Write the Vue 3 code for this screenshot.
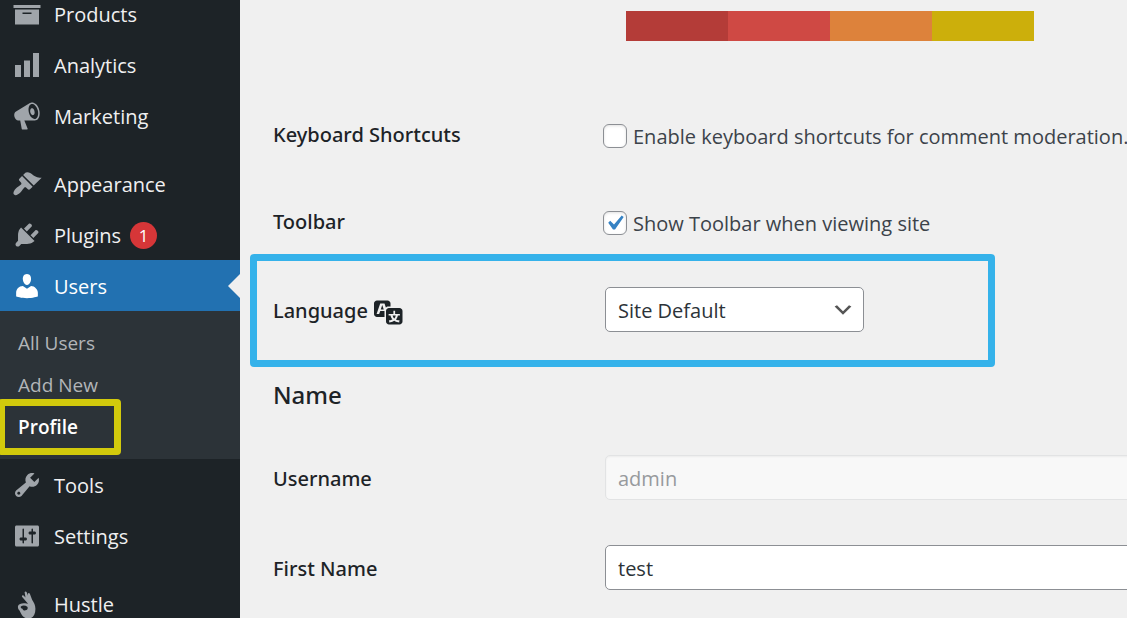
<script setup>
import { ref } from 'vue'

const icons = {
  archive: 'M19 4v2H1V4h18zM2 7h16v10H2V7zm11 3V9H7v1h6z',
  chart: 'M18 18V2h-4v16h4zm-6 0V7H8v11h4zm-6 0v-8H2v8h4z',
  megaphone: 'M18.15 5.94c.46 1.62.38 3.22-.02 4.48-.42 1.28-1.26 2.18-2.3 2.48-.16.06-.26.06-.4.06-.06.02-.12.02-.18.02-.06.02-.14.02-.22.02h-6.8l2.22 5.5c.02.14-.06.26-.14.34-.08.1-.24.16-.34.16H6.95c-.1 0-.26-.06-.34-.16-.08-.08-.16-.2-.14-.34l-1-5.5H4.25l-.02-.02c-.5.06-1.08-.18-1.54-.62s-.88-1.08-1.06-1.88c-.24-.8-.2-1.56-.02-2.2.18-.62.58-1.08 1.06-1.3l.02-.02 9-5.4c.1-.06.18-.1.24-.16.06-.04.14-.08.24-.12.16-.08.28-.12.5-.18 1.04-.3 2.24.1 3.22.98s1.84 2.24 2.26 3.86zm-2.58 5.98h-.02c.4-.1.74-.34 1.04-.7.58-.7.86-1.76.86-3.04 0-.64-.1-1.3-.28-1.98-.34-1.36-1.02-2.5-1.78-3.24s-1.68-1.1-2.46-.88c-.82.22-1.4.96-1.7 2-.32 1.04-.28 2.36.06 3.72.38 1.36 1 2.5 1.8 3.24.78.74 1.62 1.1 2.48.88zm-2.54-7.08c.22-.04.42-.02.62.04.38.16.76.48 1.02 1s.42 1.2.42 1.78c0 .3-.04.56-.12.8-.18.48-.44.84-.86.94-.34.1-.8-.06-1.14-.4s-.64-.86-.78-1.5c-.18-.62-.12-1.24.02-1.72s.48-.84.82-.94z',
  brush: 'M14.48 11.06L7.41 3.99l1.5-1.5c.5-.56 2.3-.47 3.51.32 1.21.8 1.43 1.28 2.91 2.1 1.18.64 2.45 1.26 4.45.85zm-.71.71L6.7 4.7 4.93 6.47c-.39.39-.39 1.02 0 1.41l1.06 1.06c.39.39.39 1.03 0 1.42-.6.6-1.43 1.11-2.21 1.69-.35.26-.7.53-1.01.84C1.43 14.23.4 16.08 1.4 17.07c.99 1 2.84-.03 4.18-1.36.31-.31.58-.66.85-1.02.57-.78 1.08-1.61 1.69-2.21.39-.39 1.02-.39 1.41 0l1.06 1.06c.39.39 1.02.39 1.41 0z',
  plug: 'M13.11 4.36L9.87 7.6 8 5.73l3.24-3.24c.35-.34 1.05-.2 1.56.32.52.51.66 1.21.31 1.55zm-8 1.77l.91-1.12 9.01 9.01-1.19.84c-.71.71-2.63 1.16-3.82 1.16H6.14L4.9 17.26c-.59.59-1.54.59-2.12 0-.59-.58-.59-1.53 0-2.12l1.24-1.24v-3.88c0-1.13.4-3.19 1.09-3.89zm7.26 3.97l3.24-3.24c.34-.35 1.04-.21 1.55.31.52.51.66 1.21.31 1.55l-3.24 3.25z',
  user: 'M10 9.25c-2.27 0-2.73-3.44-2.73-3.44C7 4.02 7.82 2 9.97 2c2.16 0 2.98 2.02 2.71 3.81 0 0-.41 3.44-2.68 3.44zm0 2.57L12.72 10c2.39 0 4.52 2.33 4.52 4.53v2.49s-3.65 1.13-7.24 1.13c-3.65 0-7.24-1.13-7.24-1.13v-2.49c0-2.25 1.94-4.48 4.47-4.48z',
  wrench: 'M16.68 9.77c-1.34 1.34-3.3 1.67-4.95.99l-5.41 6.52c-.99.99-2.59.99-3.58 0s-.99-2.59 0-3.57l6.52-5.42c-.68-1.65-.35-3.61.99-4.95 1.28-1.28 3.12-1.62 4.72-1.06l-2.89 2.89 2.82 2.82 2.86-2.87c.53 1.58.18 3.39-1.08 4.65zM3.81 16.21c.4.39 1.04.39 1.43 0 .4-.4.4-1.04 0-1.43-.39-.4-1.03-.4-1.43 0-.39.39-.39 1.03 0 1.43z',
  sliders: 'M18 16V4c0-.55-.45-1-1-1H3c-.55 0-1 .45-1 1v12c0 .55.45 1 1 1h14c.55 0 1-.45 1-1zM8 11h1c.55 0 1 .45 1 1s-.45 1-1 1H8v1.5c0 .28-.22.5-.5.5s-.5-.22-.5-.5V13H6c-.55 0-1-.45-1-1s.45-1 1-1h1V5.5c0-.28.22-.5.5-.5s.5.22.5.5V11zm5-2h-1c-.55 0-1-.45-1-1s.45-1 1-1h1V5.5c0-.28.22-.5.5-.5s.5.22.5.5V7h1c.55 0 1 .45 1 1s-.45 1-1 1h-1v5.5c0 .28-.22.5-.5.5s-.5-.22-.5-.5V9z',
  hand: 'M8.4 2.2C8.600 1.400 9.500 1.500 9.800 2.200L10.700 4.500L10.600 3.400C10.700 2.600 11.500 2.500 11.900 3.200L13.400 7.200C14.800 9.200 15.700 11.200 15.600 13.500C15.600 17.200 13.800 19.700 11 19.700C8.600 19.700 7 18.300 6 16.300L5 14.400C4.200 13.500 3.800 12.500 4 11.400C4.500 9.800 6.600 9.300 8.700 9.500L10.700 9.800L6.800 5.400C6.300 4.600 6.900 3.900 7.700 4.400L9 5.600ZM5.900 11.700C5.600 12.600 6.200 13.100 7 13.100C7.200 14.300 8.500 14.600 9.600 14C10.500 13.500 10.700 12.400 10.200 11.800C9 10.900 6.900 10.800 5.900 11.700Z',
}

const menu = [
  [
    { label: 'Products', icon: 'archive' },
    { label: 'Analytics', icon: 'chart' },
    { label: 'Marketing', icon: 'megaphone' },
  ],
  [
    { label: 'Appearance', icon: 'brush' },
    { label: 'Plugins', icon: 'plug', count: 1 },
    { label: 'Users', icon: 'user', children: ['All Users', 'Add New', 'Profile'] },
    { label: 'Tools', icon: 'wrench' },
    { label: 'Settings', icon: 'sliders' },
  ],
  [{ label: 'Hustle', icon: 'hand' }],
]

const shortcuts = ref(false)
const toolbar = ref(true)
const language = ref('Site Default')
const username = ref('admin')
const firstName = ref('test')
</script>

<template>
  <div class="admin">
    <nav class="sidebar" aria-label="Main menu">
      <ul v-for="(group, g) in menu" :key="g" class="group">
        <li v-for="item in group" :key="item.label">
          <a href="#" class="item" :class="{ current: item.children }">
            <svg class="icon" viewBox="0 0 20 20" aria-hidden="true">
              <path :d="icons[item.icon]" fill-rule="evenodd" />
            </svg>
            <span class="item-text">{{ item.label }}</span>
            <span v-if="item.count" class="count">{{ item.count }}</span>
          </a>
          <ul v-if="item.children" class="submenu">
            <li v-for="child in item.children" :key="child" :class="{ marked: child === 'Profile' }">
              <a href="#" class="subitem">{{ child }}</a>
            </li>
          </ul>
        </li>
      </ul>
    </nav>

    <main class="content">
      <div class="palette" aria-hidden="true">
        <span class="c1"></span><span class="c2"></span><span class="c3"></span><span class="c4"></span>
      </div>
      <form @submit.prevent>
        <div class="row check-row">
          <span class="label">Keyboard Shortcuts</span>
          <label class="check"><input v-model="shortcuts" type="checkbox" /><span>Enable keyboard shortcuts for comment moderation.</span></label>
        </div>
        <div class="row check-row">
          <span class="label">Toolbar</span>
          <label class="check"><input v-model="toolbar" type="checkbox" /><span>Show Toolbar when viewing site</span></label>
        </div>
        <div class="row language">
          <label class="label" for="language">
            Language
            <svg class="translate" viewBox="0 0 20 20" aria-hidden="true">
              <path d="M11 7H9.490c-.63 0-1.250.3-1.590.7L7 5H4.130l-2.390 7h1.690l.74-2H7v4H2c-1.100 0-2-.9-2-2V5c0-1.100.9-2 2-2h7c1.100 0 2 .9 2 2v2zM6.510 9H4.490l1-2.930zM10 8h7c1.100 0 2 .9 2 2v7c0 1.100-.9 2-2 2h-7c-1.100 0-2-.9-2-2v-7c0-1.100.9-2 2-2zm7.250 5v-1.080h-3.170V9.750h-1.160v2.170H9.750V13h1.280c.11.85.56 1.850 1.280 2.620-.87.36-1.890.62-2.310.62-.01.02.22.97.2 1.460.84 0 2.210-.5 3.280-1.150 1.090.65 2.480 1.150 3.340 1.150-.02-.49.2-1.440.2-1.460-.43 0-1.490-.27-2.380-.63.7-.77 1.140-1.770 1.250-2.610h1.360zm-3.810 1.930c-.5-.46-.85-1.130-1.010-1.930h2.090c-.17.8-.51 1.470-1 1.930l-.04.03s-.03-.02-.04-.03z" />
            </svg>
          </label>
          <span class="select">
            <select id="language" v-model="language"><option>Site Default</option></select>
            <svg viewBox="0 0 20 20" aria-hidden="true"><path d="M5 6l5 5 5-5 2 1-7 7-7-7 2-1z" /></svg>
          </span>
        </div>
        <h2>Name</h2>
        <div class="row">
          <label class="label" for="username">Username</label>
          <input id="username" v-model="username" class="field" type="text" disabled />
        </div>
        <div class="row">
          <label class="label" for="first-name">First Name</label>
          <input id="first-name" v-model="firstName" class="field" type="text" />
        </div>
      </form>
    </main>
  </div>
</template>

<style>
body {
  background: #f0f0f0;
}
</style>

<style scoped>
.admin {
  display: flex;
  height: 100vh;
  overflow: hidden;
  background: #f0f0f0;
  color: #1d2327;
  font: 20px/28px "Open Sans", "Noto Sans", sans-serif;
}
ul {
  list-style: none;
  margin: 0;
  padding: 0;
}
.sidebar {
  flex: 0 0 240px;
  margin-top: -12px;
  background: #1d2327;
}
.group + .group {
  margin-top: 17px;
}
.item {
  position: relative;
  display: flex;
  align-items: center;
  height: 51px;
  padding-left: 12px;
  color: #f0f0f1;
  text-decoration: none;
}
.item-text {
  padding-top: 2px;
}
.icon {
  width: 30px;
  height: 30px;
  margin-right: 12px;
  fill: #a0a5aa;
}
.current {
  background: #2271b1;
  color: #fff;
}
.current .icon {
  fill: #fff;
}
.current::after {
  content: "";
  position: absolute;
  right: 0;
  border: 12px solid transparent;
  border-left-width: 0;
  border-right-color: #f0f0f0;
}
.count {
  width: 27px;
  margin: 2px 0 0 9px;
  border-radius: 14px;
  background: #d63638;
  color: #fff;
  font-size: 17px;
  line-height: 27px;
  text-align: center;
}
.submenu {
  padding: 11px 0;
  background: #2c3338;
}
.subitem {
  display: block;
  padding-left: 18px;
  color: #b2b5b8;
  font-size: 19px;
  line-height: 42px;
  text-decoration: none;
}
.marked {
  position: relative;
}
.marked .subitem {
  color: #fff;
  font-weight: 600;
}
.marked::after {
  content: "";
  position: absolute;
  inset: -7px auto -7px -2px;
  box-sizing: border-box;
  width: 123px;
  border: 7px solid #d2ca0c;
  border-radius: 4px;
  pointer-events: none;
}
.content {
  flex: 1;
  min-width: 0;
  padding: 11px 0 0 33px;
}
.palette {
  display: flex;
  margin: 0 0 51px 353px;
}
.palette span {
  width: 102px;
  height: 30px;
}
.c1 { background: #b43c38; }
.c2 { background: #cf4944; }
.c3 { background: #dd823b; }
.c4 { background: #ccaf0b; }
.row {
  position: relative;
  display: grid;
  grid-template-columns: 332px 1fr;
  align-items: center;
  height: 90px;
}
.label {
  display: flex;
  align-items: center;
  padding-top: 4px;
  font-family: "Noto Sans", "Open Sans", sans-serif;
  font-size: 20px;
  font-weight: 500;
}
.check-row {
  grid-template-columns: 330px 1fr;
  height: 87px;
}
.check-row .label {
  padding: 0 0 2px;
}
.language {
  height: 86px;
}
.language::after {
  content: "";
  position: absolute;
  inset: -12px auto -15px -23px;
  box-sizing: border-box;
  width: 745px;
  border: 7px solid #35b2ea;
  border-radius: 4px;
  pointer-events: none;
}
.translate {
  width: 30px;
  height: 30px;
  margin-left: 6px;
  fill: #1d2327;
}
.check {
  display: flex;
  align-items: center;
  color: #3c434a;
  white-space: nowrap;
}
.check span {
  padding-top: 2px;
}
.check input {
  appearance: none;
  display: grid;
  place-items: center;
  flex: none;
  width: 24px;
  height: 24px;
  margin: 0 6px 0 0;
  border: 1px solid #8c8f94;
  border-radius: 6px;
  background: #fff;
  box-shadow: inset 0 1px 3px rgba(0, 0, 0, 0.12);
}
.check input:checked::before {
  content: "";
  width: 22px;
  height: 22px;
  background: #3582c4;
  clip-path: path("M17.7 4L19.7 5.4L11 18H9L4.2 11.2L6.200 9.300L10 12.900Z");
}
.select {
  position: relative;
  width: 259px;
}
select,
.field {
  box-sizing: border-box;
  display: block;
  height: 45px;
  padding: 2px 12px 0;
  border: 1px solid #8c8f94;
  border-radius: 5px;
  background: #fff;
  color: #2c3338;
  font: inherit;
}
select {
  appearance: none;
  width: 100%;
  padding-top: 4px;
}
.select svg {
  position: absolute;
  top: 11px;
  right: 9px;
  width: 24px;
  height: 24px;
  fill: #555;
  pointer-events: none;
}
.field {
  width: 560px;
}
.field:disabled {
  border-color: #e2e3e4;
  background: #f8f8f8;
  box-shadow: inset 0 1px 2px rgba(0, 0, 0, 0.05);
  color: #979a9d;
}
h2 {
  margin: 0;
  padding-top: 6px;
  font-family: "Noto Sans", "Open Sans", sans-serif;
  font-size: 24px;
  font-weight: 500;
  line-height: 74px;
}
</style>
